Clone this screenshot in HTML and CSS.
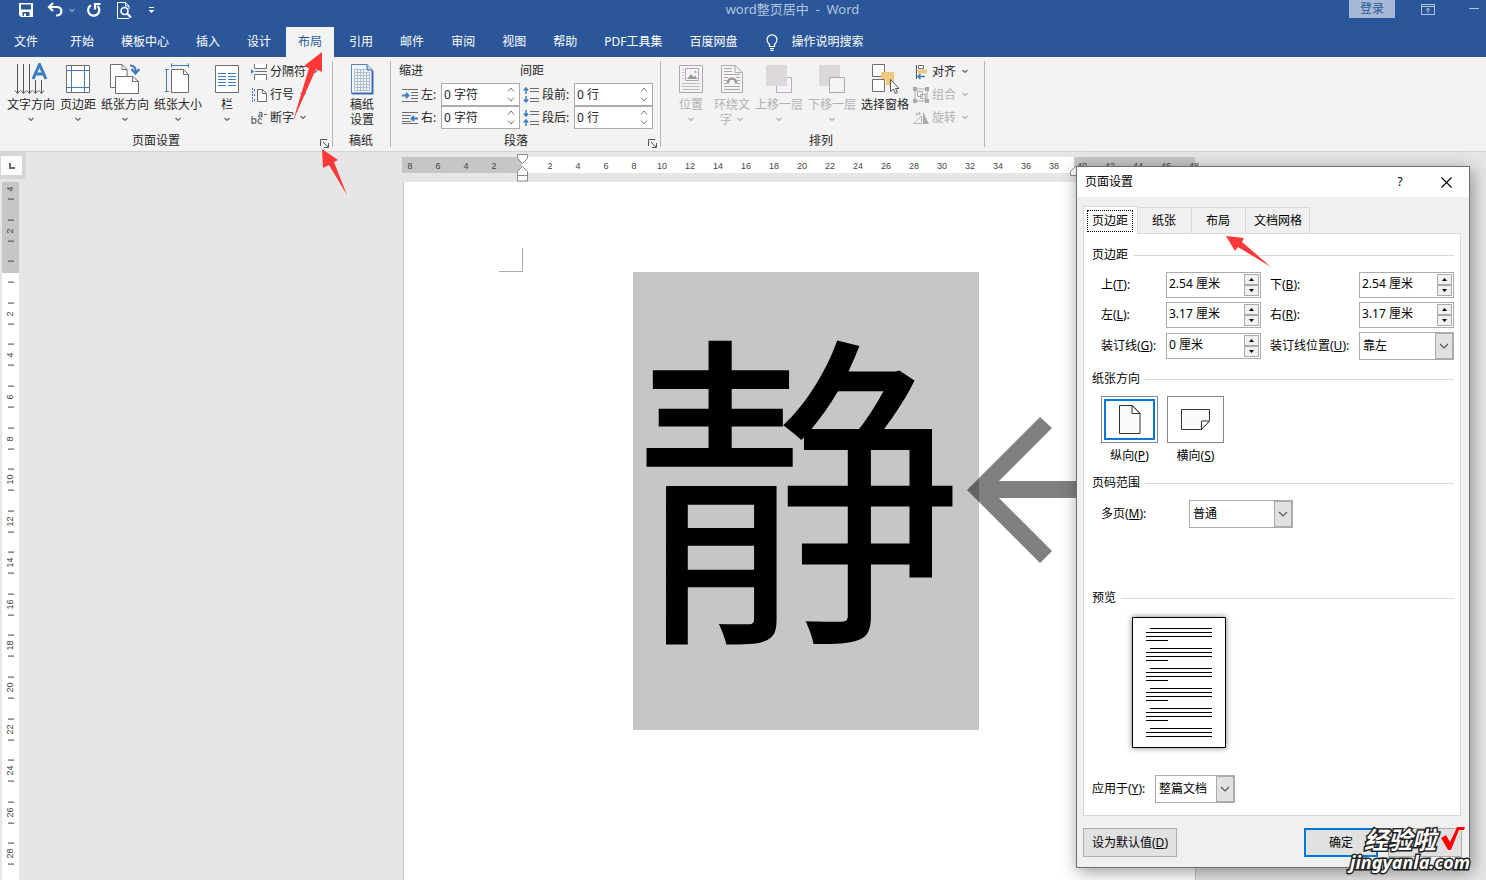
FILE: index.html
```html
<!DOCTYPE html>
<html lang="zh-CN">
<head>
<meta charset="utf-8">
<title>word整页居中 - Word</title>
<link rel="stylesheet" href="styles.css">
</head>
<body>
<svg class="defs" aria-hidden="true">
  <symbol id="chev" viewBox="0 0 8 5"><path d="M1.5 1 4 3.5 6.5 1" fill="none" stroke="currentColor" stroke-width="1.2"/></symbol>
  <symbol id="launch" viewBox="0 0 9 9"><path d="M.5 7V.5H7M3 3l5 5M8.500 4v4.500H4" fill="none" stroke="#555"/></symbol>
  <symbol id="combo" viewBox="0 0 10 6"><path d="M1 1l4 4 4-4" fill="none" stroke="#555" stroke-width="1.2"/></symbol>
  <symbol id="thin-up" viewBox="0 0 8 5"><path d="M1 4.500 4 1l3 3.500" fill="none" stroke="#777"/></symbol>
  <symbol id="thin-down" viewBox="0 0 8 5"><path d="M1 .5 4 4 7 .5" fill="none" stroke="#777"/></symbol>
  <symbol id="tri-up" viewBox="0 0 5 3"><path d="M0 3 2.500 0 5 3z"/></symbol>
  <symbol id="tri-down" viewBox="0 0 5 3"><path d="M0 0 2.500 3 5 0z"/></symbol>
</svg>

<header class="titlebar">
  <div class="quick">
    <button aria-label="保存"><svg width="16" height="16" viewBox="0 0 16 16"><path d="M1 1h14v14H3l-2-2z" fill="#fff"/><path d="M3 2.500h10v5H3zM4.500 10h7v4h-7z" fill="#2b579a"/><path d="M6 11.500h2V14H6z" fill="#fff"/></svg></button>
    <button class="undo" aria-label="撤消"><svg width="16" height="16" viewBox="0 0 16 16"><path d="M6 1 2 5l4 4M2.500 5H10c6 0 6 8.500-1 8.500" fill="none" stroke="#fff" stroke-width="2.200"/></svg><svg class="dim" width="8" height="5"><use href="#chev"/></svg></button>
    <button aria-label="重复"><svg width="16" height="16" viewBox="0 0 16 16"><path d="M5 3.200A5.600 5.600 0 1 0 11.500 4" fill="none" stroke="#fff" stroke-width="2.200"/><path d="M9 7.500V2h5.500" fill="none" stroke="#fff" stroke-width="2.200"/></svg></button>
    <button aria-label="打印预览"><svg width="16" height="17" viewBox="0 0 16 17"><path d="M13 16.500H1.500V.5h8L13 4v3M9.500.5V4H13" fill="none" stroke="#fff"/><circle cx="8.500" cy="9" r="3.500" fill="none" stroke="#fff" stroke-width="1.600"/><path d="m11 11.500 4 4" stroke="#fff" stroke-width="2.200"/></svg></button>
    <button aria-label="自定义快速访问工具栏"><svg width="7" height="8" viewBox="0 0 7 8"><path d="M1 1.500h5" stroke="#fff"/><path d="M.5 4h6l-3 3z" fill="#fff"/></svg></button>
  </div>
  <div class="doc-title">word整页居中&nbsp; -&nbsp; Word</div>
  <div class="window-tools">
    <button class="login">登录</button>
    <button aria-label="功能区显示选项"><svg width="14" height="11" viewBox="0 0 14 11"><path d="M.5.500h13v10H.5zM.5 2.500h13M7 9V4.500M5 6.200l2-2 2 2" fill="none" stroke="#b4c5de"/></svg></button>
    <button aria-label="最小化"><svg width="10" height="2" viewBox="0 0 10 2"><path d="M0 .5h10" stroke="#b4c5de"/></svg></button>
  </div>
</header>

<nav class="tabs" aria-label="功能区">
  <button class="file">文件</button><button>开始</button><button>模板中心</button><button>插入</button><button>设计</button><button class="active">布局</button><button>引用</button><button>邮件</button><button>审阅</button><button>视图</button><button>帮助</button><button>PDF工具集</button><button>百度网盘</button>
  <button class="tell"><svg width="12" height="17" viewBox="0 0 12 17"><path d="M3.500 12.500v-2C2 9 1 8 1 5.800a5 5 0 0 1 10 0C11 8 10 9 8.500 10.500v2zM4 14.500h4M4.500 16.300h3" fill="none" stroke="#fff" stroke-width="1.200"/></svg>操作说明搜索</button>
</nav>

<section class="ribbon">
  <div class="group setup">
    <div class="group-body">
      <button class="big"><svg width="34" height="32" viewBox="0 0 34 32"><path d="M3.500 1v29M9.500 1v29M15.500 1v29M21.500 17v13M27.500 17v13M1 27.500l2.500 3 2.500-3M7 27.500l2.500 3 2.500-3M13 27.500l2.500 3 2.500-3M19 27.500l2.500 3 2.500-3M25 27.500l2.500 3 2.500-3" fill="none" stroke="#555"/><path d="M19 16 25.500 1.500 32 16M21.500 11h8" fill="none" stroke="#3e7cbd" stroke-width="3"/></svg><span>文字方向</span><svg class="chev"><use href="#chev"/></svg></button>
      <button class="big"><svg width="24" height="32" viewBox="0 0 24 32"><path d="M.5 2.500h23v27H.5z" fill="#fff" stroke="#6d6d6d"/><path d="M5.500 3v26M18.500 3v26M1 7.500h22M1 24.500h22" stroke="#3e7cbd"/></svg><span>页边距</span><svg class="chev"><use href="#chev"/></svg></button>
      <button class="big"><svg width="30" height="32" viewBox="0 0 30 32"><path d="M.5 1.500H12l5 5v18H.5z" fill="#fff" stroke="#6d6d6d"/><path d="M12 1.500v5h5" fill="none" stroke="#6d6d6d"/><path d="M5.500 13.500h17l6 5v12h-23z" fill="#fff" stroke="#6d6d6d"/><path d="M22.500 13.500v5h6" fill="none" stroke="#6d6d6d"/><path d="M20 2.500c4 0 6 2 5.500 7M21.500 6l4 4.500 4-4.500" fill="none" stroke="#3e7cbd" stroke-width="2.200"/></svg><span>纸张方向</span><svg class="chev"><use href="#chev"/></svg></button>
      <button class="big"><svg width="26" height="32" viewBox="0 0 26 32"><path d="M6 2.500h18M6.500.5v4M23.500.5v4M1.500 6v23M0 6.500h4M0 28.500h4" stroke="#3e7cbd"/><path d="M6.500 6.500h12l5 5v18h-17z" fill="#fff" stroke="#6d6d6d"/><path d="M18.500 6.500v5h5" fill="none" stroke="#6d6d6d"/></svg><span>纸张大小</span><svg class="chev"><use href="#chev"/></svg></button>
      <button class="big columns"><svg width="24" height="32" viewBox="0 0 24 32"><path d="M.5 2.500h23v27H.5z" fill="#fff" stroke="#6d6d6d"/><path d="M3 10.500h8M13 10.500h8M3 13.500h8M13 13.500h8M3 16.500h8M13 16.500h8M3 19.500h8M13 19.500h8M3 22.500h8M13 22.500h8" stroke="#3e7cbd"/></svg><span>栏</span><svg class="chev"><use href="#chev"/></svg></button>
      <div class="small-col">
        <button><svg width="16" height="16" viewBox="0 0 16 16"><path d="M3.500 0v4.500h12V0M3.500 16v-5.500h12V16M4 7.500h12" fill="#fff" stroke="#6d6d6d"/><path d="M0 5l3 2.500L0 10z" fill="#3e7cbd"/></svg>分隔符<svg class="chev"><use href="#chev"/></svg></button>
        <button><svg width="16" height="16" viewBox="0 0 16 16"><path d="M6.500 2.500h5l4 4v8h-9z" fill="#fff" stroke="#6d6d6d"/><path d="M11.500 2.500v4h4" fill="none" stroke="#6d6d6d"/><path d="M1.500 1v14M3.500 2v3M3.500 7v3M3.500 12v3" stroke="#3e7cbd" stroke-dasharray="2 1"/></svg>行号<svg class="chev"><use href="#chev"/></svg></button>
        <button><svg width="16" height="16" viewBox="0 0 16 16"><path d="M1 6v8M1 10.500c0-2.500 4-2.500 4 .5s-4 3-4 .5M11 9.500c-2-1.500-4-.5-4 1.500s2 3.500 4 2M8 3c1-1 3-.8 3 .5v3.500M11 4.500c-4 0-4 2.500-2 2.500 1 0 2-.8 2-1.500M13 4.500h3" fill="none" stroke="#666" stroke-width="1.200"/></svg>断字<svg class="chev"><use href="#chev"/></svg></button>
      </div>
    </div>
    <div class="group-label">页面设置<button class="launcher" aria-label="页面设置对话框"><svg width="9" height="9"><use href="#launch"/></svg></button></div>
  </div>

  <div class="group grid-paper">
    <div class="group-body">
      <button class="big"><svg width="24" height="32" viewBox="0 0 24 32"><path d="M1.500 1.500H17l5.500 5.500v23.500h-21z" fill="#eef5fd" stroke="#5d84b5"/><path d="M22.500 8v22.500H2" fill="none" stroke="#3a6cb5" stroke-width="2"/><path d="M17 1.500V7h5.500" fill="#bcd3ef" stroke="#456a98"/><path d="M4 6.500h12M4 9.500h16M4 12.500h16M4 15.500h16M4 18.500h16M4 21.500h16M4 24.500h16M4 27.500h16M4.500 6v21M7.500 6v21M10.500 6v21M13.500 6v21M16.500 10v17M19.500 10v17" stroke="#b3bdca"/></svg><span>稿纸</span><span>设置</span></button>
    </div>
    <div class="group-label">稿纸</div>
  </div>

  <div class="group paragraph">
    <div class="group-body">
      <div class="fields indent">
        <h3>缩进</h3>
        <div class="field"><svg width="16" height="14" viewBox="0 0 16 14"><path d="M0 1.500h16M9 4.500h7M9 7.500h7M9 10.500h7M0 13.500h16" stroke="#6d6d6d"/><path d="M0 7.500h6M4 5l2.500 2.500L4 10" fill="none" stroke="#3e7cbd" stroke-width="1.800"/></svg><label for="in-l">左:</label><div class="spin"><input id="in-l" value="0 字符"><span><svg><use href="#thin-up"/></svg><svg><use href="#thin-down"/></svg></span></div></div>
        <div class="field"><svg width="16" height="14" viewBox="0 0 16 14"><path d="M0 1.500h16M0 4.500h9M0 7.500h7M0 10.500h9M0 12.500h16" stroke="#6d6d6d"/><path d="M16 7.500h-6M12 5 9.500 7.500 12 10" fill="none" stroke="#3e7cbd" stroke-width="1.800"/></svg><label for="in-r">右:</label><div class="spin"><input id="in-r" value="0 字符"><span><svg><use href="#thin-up"/></svg><svg><use href="#thin-down"/></svg></span></div></div>
      </div>
      <div class="fields spacing">
        <h3>间距</h3>
        <div class="field"><svg width="16" height="16" viewBox="0 0 16 16"><path d="M7 1.500h9M7 4.500h9M7 11.500h9M7 14.500h9" stroke="#6d6d6d"/><path d="M3 7V1M.8 3.500 3 1l2.200 2.500M3 9v6M.8 12.500 3 15l2.200-2.500" fill="none" stroke="#3e7cbd" stroke-width="1.500"/></svg><label for="sp-b">段前:</label><div class="spin"><input id="sp-b" value="0 行"><span><svg><use href="#thin-up"/></svg><svg><use href="#thin-down"/></svg></span></div></div>
        <div class="field"><svg width="16" height="16" viewBox="0 0 16 16"><path d="M7 1.500h9M7 4.500h9M7 11.500h9M7 14.500h9" stroke="#6d6d6d"/><path d="M3 0v6M.8 3.500 3 6l2.200-2.500M3 16v-6M.8 12.500 3 10l2.200 2.500" fill="none" stroke="#3e7cbd" stroke-width="1.500"/></svg><label for="sp-a">段后:</label><div class="spin"><input id="sp-a" value="0 行"><span><svg><use href="#thin-up"/></svg><svg><use href="#thin-down"/></svg></span></div></div>
      </div>
    </div>
    <div class="group-label">段落<button class="launcher" aria-label="段落对话框"><svg width="9" height="9"><use href="#launch"/></svg></button></div>
  </div>

  <div class="group arrange">
    <div class="group-body">
      <button class="big narrow" disabled><svg width="24" height="32" viewBox="0 0 24 32"><path d="M.5 2.500h23v27H.5z" fill="#f7f2f8" stroke="#aaa"/><path d="M6.500 5.500h13v12h-13z" fill="none" stroke="#aaa"/><path d="m8 16 4-5 2.500 3 1.500-1.500 2.500 3.500z" fill="#999"/><circle cx="16.500" cy="9" r="1" fill="#999"/><path d="M3 6.500h2M3 9.500h2M3 12.500h2M3 15.500h2M3 20.500h18M3 23.500h18M3 26.500h18" stroke="#bbb"/></svg><span>位置</span><svg class="chev"><use href="#chev"/></svg></button>
      <button class="big narrow" disabled><svg width="22" height="32" viewBox="0 0 22 32"><path d="M.5 2.500H14l7.500 7v20H.5z" fill="#f7f2f8" stroke="#aaa"/><path d="M14 2.500v7h7M3 5.500h8M3 8.500h8M3 11.500h16M3 14.500h4M15 14.500h4M3 17.500h3M16 17.500h3M3 20.500h3M16 20.500h3M3 23.500h16M3 26.500h16" fill="none" stroke="#aaa"/><path d="M7 20.500v-1a4 4 0 0 1 8 0v1" fill="none" stroke="#999" stroke-width="2.500"/></svg><span>环绕文</span><span>字 <svg class="chev"><use href="#chev"/></svg></span></button>
      <button class="big" disabled><svg width="28" height="32" viewBox="0 0 28 32"><path d="M11.500 14.500h15v15h-15z" fill="#f7f2f8" stroke="#b5b0b5"/><path d="M1 2h21v21H1z" fill="#dcd8dc"/></svg><span>上移一层</span><svg class="chev"><use href="#chev"/></svg></button>
      <button class="big" disabled><svg width="28" height="32" viewBox="0 0 28 32"><path d="M1 2h21v21H1z" fill="#dcd8dc"/><path d="M11.500 14.500h15v15h-15z" fill="#f7f2f8" stroke="#aaa"/></svg><span>下移一层</span><svg class="chev"><use href="#chev"/></svg></button>
      <button class="big"><svg width="28" height="32" viewBox="0 0 28 32"><path d="M1.500 1.500h12v12h-12zM1.500 16.500h12v12h-12z" fill="#fff" stroke="#6d6d6d"/><path d="M10 9h13v13h-8v-6h-5z" fill="#eec77c"/><path d="M19.500 16.500v12l3-2.500 2 4.500 2-1-2-4h3.500z" fill="#fff" stroke="#555"/></svg><span>选择窗格</span></button>
      <div class="small-col">
        <button><svg width="16" height="16" viewBox="0 0 16 16"><path d="M3.500 1v14" stroke="#555"/><path d="M5.500 1.500h5v3h-5z" fill="#fff" stroke="#6d6d6d"/><path d="M5 5.500h9v4H5z" fill="#eec77c"/><path d="M5 12.500h7M7.500 10 5 12.500 7.500 15" fill="none" stroke="#3e7cbd" stroke-width="1.500"/></svg>对齐<svg class="chev"><use href="#chev"/></svg></button>
        <button disabled><svg width="16" height="16" viewBox="0 0 16 16"><path d="M2 2h12v12H2zM4.500 4.500h5v5h-5zM7.500 7.500h5v4h-5z" fill="none" stroke="#aaa"/><path d="M0 0h4v4H0zM12 0h4v4h-4zM0 12h4v4H0zM12 12h4v4h-4z" fill="#aaa"/></svg>组合<svg class="chev"><use href="#chev"/></svg></button>
        <button disabled><svg width="16" height="16" viewBox="0 0 16 16"><path d="M8.500 6v7.500h-8zM3.500 6V3.500h4M5.500 1.500l2 2-2 2" fill="none" stroke="#b5b5b5"/><path d="M10 2l6 12h-6z" fill="#aaa"/></svg>旋转<svg class="chev"><use href="#chev"/></svg></button>
      </div>
    </div>
    <div class="group-label">排列</div>
  </div>
</section>

<main class="workspace">
  <aside class="left-rail">
    <button class="tab-stop" aria-label="制表符"><svg width="6" height="6" viewBox="0 0 6 6"><path d="M1 0v5h5" fill="none" stroke="#666" stroke-width="2"/></svg></button>
    <div class="v-ruler"><ol>
      <li>4</li><li>2</li><li></li><li>2</li><li>4</li><li>6</li><li>8</li><li>10</li><li>12</li><li>14</li><li>16</li><li>18</li><li>20</li><li>22</li><li>24</li><li>26</li><li>28</li>
    </ol></div>
  </aside>
  <div class="canvas">
    <div class="h-ruler"><ol>
      <li>8</li><li>6</li><li>4</li><li>2</li><li></li><li>2</li><li>4</li><li>6</li><li>8</li><li>10</li><li>12</li><li>14</li><li>16</li><li>18</li><li>20</li><li>22</li><li>24</li><li>26</li><li>28</li><li>30</li><li>32</li><li>34</li><li>36</li><li>38</li><li>40</li><li>42</li><li>44</li><li>46</li><li>48</li>
    </ol>
      <svg class="marker" width="12" height="28" viewBox="0 0 12 28"><path d="M.5.500h10v4l-5 5-5-5zM5.500 12.500l5 5v9.500H.5v-9.500zM.5 21.500h10" fill="#fff" stroke="#888"/></svg>
      <svg class="marker right" width="12" height="28" viewBox="0 0 12 28"><path d="M5.500 12.500l5 5v4H.5v-4z" fill="#fff" stroke="#888"/></svg>
    </div>
    <article class="page">
      <div class="crop-mark"></div>
      <p class="glyph">静</p>
      <svg class="big-arrow" width="160" height="148" viewBox="0 0 160 148"><path d="M0 74 73 1l12 11-53 53h128v17H32l53 53-12 12z" fill="#000" fill-opacity=".5"/></svg>
    </article>
  </div>
</main>

<svg class="pointer to-tab" width="34" height="72" viewBox="0 0 34 72"><path d="M31 1v20l-6-3L2 70 18 17l-5-2z" fill="#fc3938"/></svg>
<svg class="pointer to-launcher" width="28" height="48" viewBox="0 0 28 48"><path d="M1 1l16 11-4 2 13 33L8 17l-6 3z" fill="#fc3938"/></svg>

<section class="dialog" role="dialog" aria-label="页面设置">
  <header class="dialog-title"><h2>页面设置</h2><button aria-label="帮助">?</button><button aria-label="关闭"><svg width="11" height="11" viewBox="0 0 11 11"><path d="M.5.500l10 10M10.500.5l-10 10" stroke="#000" stroke-width="1.100"/></svg></button></header>
  <div class="dialog-body">
    <div class="dialog-tabs" role="tablist"><button role="tab" aria-selected="true"><span>页边距</span></button><button role="tab">纸张</button><button role="tab">布局</button><button role="tab">文档网格</button></div>
    <div class="panel">
      <h3>页边距</h3>
      <div class="margins">
        <label for="m-t">上(<u>T</u>):</label><div class="num"><input id="m-t" value="2.54 厘米"><span><button aria-label="增加"><svg><use href="#tri-up"/></svg></button><button aria-label="减少"><svg><use href="#tri-down"/></svg></button></span></div>
        <label for="m-b">下(<u>B</u>):</label><div class="num"><input id="m-b" value="2.54 厘米"><span><button aria-label="增加"><svg><use href="#tri-up"/></svg></button><button aria-label="减少"><svg><use href="#tri-down"/></svg></button></span></div>
        <label for="m-l">左(<u>L</u>):</label><div class="num"><input id="m-l" value="3.17 厘米"><span><button aria-label="增加"><svg><use href="#tri-up"/></svg></button><button aria-label="减少"><svg><use href="#tri-down"/></svg></button></span></div>
        <label for="m-r">右(<u>R</u>):</label><div class="num"><input id="m-r" value="3.17 厘米"><span><button aria-label="增加"><svg><use href="#tri-up"/></svg></button><button aria-label="减少"><svg><use href="#tri-down"/></svg></button></span></div>
        <label for="m-g">装订线(<u>G</u>):</label><div class="num"><input id="m-g" value="0 厘米"><span><button aria-label="增加"><svg><use href="#tri-up"/></svg></button><button aria-label="减少"><svg><use href="#tri-down"/></svg></button></span></div>
        <label for="m-u">装订线位置(<u>U</u>):</label><div class="combo"><select id="m-u"><option>靠左</option></select><span><svg><use href="#combo"/></svg></span></div>
      </div>
      <h3>纸张方向</h3>
      <div class="orient">
        <label><input type="radio" name="orient" checked><span class="tile"><svg width="22" height="29" viewBox="0 0 22 29"><path d="M.5.500h13l7.500 8v20H.5z" fill="#fafafa" stroke="#333"/><path d="M13 .5v8h8z" fill="#fff" stroke="#333"/></svg></span><span>纵向(<u>P</u>)</span></label>
        <label><input type="radio" name="orient"><span class="tile"><svg width="29" height="21" viewBox="0 0 29 21"><path d="M.5.500h28v11l-8 9H.5z" fill="#fafafa" stroke="#333"/><path d="M20.500 20.500v-8.500h8z" fill="#fff" stroke="#333"/></svg></span><span>横向(<u>S</u>)</span></label>
      </div>
      <h3 class="range">页码范围</h3>
      <div class="pages-row"><label for="pages">多页(<u>M</u>):</label><div class="combo"><select id="pages"><option>普通</option></select><span><svg><use href="#combo"/></svg></span></div></div>
      <h3 class="preview-title">预览</h3>
      <svg class="preview" width="94" height="131" viewBox="0 0 94 131"><path d="M.5.500h93v130H.5z" fill="#fff" stroke="#000"/><path d="M18 11.500h62M14 15.500h66M14 19.500h66M14 23.500h22M18 31.500h62M14 35.500h66M14 39.500h66M14 43.500h22M18 51.500h62M14 55.500h66M14 59.500h66M14 63.500h22M18 71.500h62M14 75.500h66M14 79.500h66M14 83.500h22M18 91.500h62M14 95.500h66M14 99.500h66M14 103.500h22M18 111.500h62M14 115.500h66M14 119.500h66" stroke="#000"/></svg>
      <div class="apply-row"><label for="apply">应用于(<u>Y</u>):</label><div class="combo"><select id="apply"><option>整篇文档</option></select><span><svg><use href="#combo"/></svg></span></div></div>
    </div>
    <footer class="dialog-foot"><button class="default">设为默认值(<u>D</u>)</button><button class="ok">确定</button><button class="cancel">取消</button></footer>
  </div>
  <svg class="pointer to-layout" width="48" height="34" viewBox="0 0 48 34"><path d="M1 1l18 2-2 4 29 25-33-20-3 4z" fill="#fc3938"/></svg>
  <div class="watermark"><div><b>经验啦</b><svg width="26" height="26" viewBox="0 0 26 26"><path d="M1 12l5-3 4 7L17 1h8l-1 3h-5L11 24H8z" fill="#f00" stroke="#fff" stroke-width=".8"/></svg></div><span>jingyanla.com</span></div>
</section>
</body>
</html>
```

FILE: styles.css
```css
* { box-sizing: border-box; }
body {
  margin: 0;
  height: 100vh;
  display: flex;
  flex-direction: column;
  position: relative;
  overflow: hidden;
  background: #e6e6e6;
  color: #262626;
  font: 12px/18px "Noto Sans", "Noto Sans CJK SC", sans-serif;
}
button, input, select { font: inherit; color: inherit; margin: 0; padding: 0; border: 0; background: none; border-radius: 0; }
button { white-space: nowrap; }
h2, h3, p, ol { margin: 0; padding: 0; font: inherit; list-style: none; }
svg { display: block; flex: none; }
.defs { position: absolute; width: 0; height: 0; }

.titlebar { display: flex; height: 27px; background: #2b579a; color: #b4c5de; }
.quick { display: flex; align-items: center; gap: 14px; width: 236px; height: 20px; padding-left: 18px; }
.quick button { display: flex; align-items: center; }
.undo { gap: 5px; margin: 0 -4px 0 -1px; }
.quick button:last-child { margin-left: 2px; }
.dim { color: #8ea8cf; }
.doc-title { flex: 1; height: 20px; line-height: 19px; font-size: 13px; text-align: center; }
.window-tools { display: flex; align-items: center; height: 18px; gap: 26px; width: 137px; }
.window-tools button:last-child { margin-left: 8px; }
.login { width: 46px; height: 18px; background: #a6b9d6; color: #2b579a; }

.tabs { display: flex; height: 30px; gap: 3px; padding-left: 2px; background: #2b579a; color: #fff; }
.tabs button { padding: 0 12px; line-height: 28px; }
.tabs .file { margin-right: 5px; }
.tabs .active { background: #f3f3f3; color: #2b579a; }
.tabs .tell { display: flex; align-items: center; gap: 13px; margin-left: 2px; }

.ribbon { display: flex; height: 95px; background: #f3f3f3; border-bottom: 1px solid #d2d2d2; }
.group { position: relative; display: flex; flex-direction: column; padding-top: 6px; }
.group::after { content: ""; position: absolute; right: 0; top: 4px; bottom: 4px; width: 1px; background: #b5b5b5; }
.group-body { display: flex; height: 69px; gap: 5px; }
.group-label { position: relative; text-align: center; padding-right: 28px; }
.launcher { position: absolute; right: 4px; top: 7px; }
.setup { width: 333px; padding-left: 7px; }
.grid-paper { width: 58px; }
.grid-paper .group-body { justify-content: center; }
.grid-paper .group-label { padding: 0 2px 0 0; }
.paragraph { width: 270px; padding-left: 8px; }
.paragraph .group-body { gap: 0; margin-top: -1px; height: 70px; }
.arrange { width: 324px; padding-left: 12px; }
.arrange .group-label { padding-right: 16px; }
.big { display: flex; flex-direction: column; align-items: center; line-height: 15px; }
.big > svg:first-child { margin-bottom: 2px; }
.big span { display: flex; align-items: center; gap: 4px; }
.chev { width: 8px; height: 5px; color: #666; }
.big > .chev { margin-top: 5px; }
.columns { width: 40px; }
.narrow { width: 36px; }
button:disabled { color: #b1b1b1; }
button:disabled .chev { color: #b1b1b1; }
.small-col { display: flex; flex-direction: column; margin: -3px 0 0 -1px; }
.small-col button { display: flex; align-items: center; height: 23px; gap: 3px; }
.small-col .chev { margin-left: 2px; }
.fields { display: flex; flex-direction: column; }
.indent { width: 121px; }
.spacing { width: 133px; }
.fields h3 { margin-bottom: 3px; }
.field { display: flex; align-items: center; gap: 3px; height: 23px; padding-left: 3px; }
.field label { flex: 1; white-space: nowrap; }
.spin { display: flex; width: 79px; height: 23px; border: 1px solid #ababab; background: #fff; }
.spin input { flex: 1; min-width: 0; padding-left: 2px; }
.spin span { display: flex; flex-direction: column; justify-content: space-between; width: 12px; padding: 3px 0; }
.spin svg { width: 8px; height: 5px; }

.workspace { flex: 1; min-height: 0; display: flex; }
.left-rail { width: 27px; display: flex; flex-direction: column; }
.tab-stop { display: flex; align-items: center; justify-content: center; width: 26px; height: 27px; border: 4px solid #d6d6d6; border-left-width: 1px; background: #fcfcfc; margin-bottom: 3px; }
.v-ruler { flex: 1; min-height: 0; width: 17px; margin-left: 2px; overflow: hidden; background: linear-gradient(#c6c6c6 91px, #fff 91px); }
.v-ruler ol { display: grid; grid-template-rows: repeat(17, 1fr); height: 707px; margin-top: -14px; }
.v-ruler li { writing-mode: vertical-rl; transform: rotate(180deg); display: flex; align-items: center; justify-content: center; position: relative; color: #444; font: 9px/15px "Liberation Sans", sans-serif; }
.v-ruler li::before, .v-ruler li::after { content: ""; position: absolute; left: 5px; width: 6px; height: 1px; background: #444; }
.v-ruler li::before { top: 25%; }
.v-ruler li::after { top: 75%; }
.canvas { flex: 1; padding: 5px 0 0 375px; display: flex; flex-direction: column; }
.h-ruler { position: relative; width: 793px; height: 16px; background: linear-gradient(90deg, #c6c6c6 120px, #fff 120px 671px, #c6c6c6 673px); margin-bottom: 9px; }
.h-ruler ol { display: flex; margin-left: -6px; }
.h-ruler li { flex: 0 0 28px; text-align: center; color: #444; font: 9px/18px "Liberation Sans", sans-serif; }
.marker { position: absolute; left: 115px; top: -3px; }
.marker.right { left: 668px; }
.page { position: relative; flex: 1; min-height: 0; width: 793px; margin-left: 1px; padding-top: 66px; background: #fff; border: 1px solid #c6c6c6; border-width: 0 1px; }
.crop-mark { width: 24px; height: 24px; margin-left: 95px; border: 1px solid #aaa; border-width: 0 1px 1px 0; }
.glyph { width: 346px; height: 458px; margin-left: 229px; padding-right: 16px; background: #c6c6c6; color: #000; text-align: center; font: 330px/404px "Noto Sans CJK SC", sans-serif; }
.big-arrow { position: absolute; left: 563px; top: 234px; }

.pointer { position: absolute; }
.to-tab { left: 291px; top: 51px; }
.to-launcher { left: 321px; top: 148px; }
.to-layout { left: 148px; top: 68px; }

.dialog { position: absolute; right: 16px; top: 166px; width: 394px; background: #f0f0f0; border: 1px solid #6e6e6e; color: #000; box-shadow: 2px 4px 16px rgba(0,0,0,.4); }
.dialog-title { display: flex; align-items: center; height: 30px; background: #fff; padding-left: 8px; }
.dialog-title h2 { flex: 1; }
.dialog-title button { width: 46px; display: flex; justify-content: center; }
.dialog-body { padding: 9px 7px 10px 6px; }
.dialog-tabs { display: flex; align-items: flex-end; height: 28px; margin-bottom: -1px; position: relative; }
.dialog-tabs button { height: 26px; margin-bottom: 1px; padding: 0 15px 0 14px; border: 1px solid #d9d9d9; border-width: 1px 1px 0 0; }
.dialog-tabs button:last-child { padding: 0 7px 0 8px; }
.dialog-tabs button[aria-selected] { height: 28px; margin: 0; padding: 0 4px 0 3px; background: #fff; border-left-width: 1px; }
.dialog-tabs span { display: block; padding: 0 4px; line-height: 20px; border: 1px dotted #000; }
.panel { background: #fff; border: 1px solid #d9d9d9; margin-right: 1px; padding: 11px 6px 12px 8px; }
.panel h3 { display: flex; align-items: center; gap: 5px; line-height: 20px; margin-bottom: 7px; }
.panel h3::after { content: ""; flex: 1; height: 1px; background: #d9d9d9; }
.margins { display: grid; grid-template-columns: 74px 95px 98px 95px; row-gap: 4px; align-items: center; margin-bottom: 9px; }
.margins label { padding-left: 9px; white-space: nowrap; }
.num { display: flex; height: 26px; border: 1px solid #ababab; background: #fff; padding: 1px; }
.num input { flex: 1; min-width: 0; padding: 0 0 3px 1px; }
.num span { display: flex; flex-direction: column; width: 15px; }
.num button { flex: 1; display: flex; align-items: center; justify-content: center; background: #f0f0f0; border: 1px solid #ababab; }
.num svg { width: 5px; height: 3px; }
.combo { position: relative; display: flex; height: 28px; border: 1px solid #ababab; background: #fff; }
.combo select { appearance: none; flex: 1; min-width: 0; padding-left: 3px; outline: 0; }
.combo span { position: absolute; right: 0; top: 0; bottom: 0; width: 18px; display: flex; align-items: center; justify-content: center; background: #e1e1e1; border: 1px solid #ababab; pointer-events: none; }
.combo svg { width: 10px; height: 6px; }
.orient { display: flex; gap: 9px; padding-left: 9px; }
.orient label { position: relative; display: flex; flex-direction: column; align-items: center; gap: 3px; line-height: 20px; }
.orient input { position: absolute; opacity: 0; }
.tile { display: flex; align-items: center; justify-content: center; width: 57px; height: 47px; border: 1px solid #828790; }
.orient input:checked + .tile { outline: 2px solid #0078d7; outline-offset: -5px; }
.panel .range { margin-top: 7px; }
.pages-row { display: flex; align-items: center; padding-left: 9px; }
.pages-row label { width: 88px; }
.pages-row .combo { width: 104px; }
.panel .preview-title { margin: 60px 0 9px; }
.preview { margin: 0 0 27px 40px; box-shadow: 0 0 6px rgba(0,0,0,.5); }
.apply-row { display: flex; align-items: center; }
.apply-row label { width: 63px; }
.apply-row .combo { width: 80px; }
.dialog-foot { display: flex; gap: 10px; margin-top: 12px; }
.dialog-foot button { width: 74px; height: 29px; background: #e1e1e1; border: 1px solid #adadad; }
.dialog-foot .default { width: 94px; margin-right: auto; }
.dialog-foot .ok { border: 2px solid #0078d7; }
.watermark { position: absolute; right: -1px; bottom: -6px; display: flex; flex-direction: column; align-items: flex-end; color: #fff; -webkit-text-stroke: 3px #222; paint-order: stroke fill; }
.watermark div { display: flex; align-items: center; gap: 4px; height: 25px; padding-right: 4px; }
.watermark b { font: italic bold 24px/26px "Noto Sans CJK SC", sans-serif; }
.watermark span { font: italic bold 18px/22px "Noto Sans", sans-serif; }
```
